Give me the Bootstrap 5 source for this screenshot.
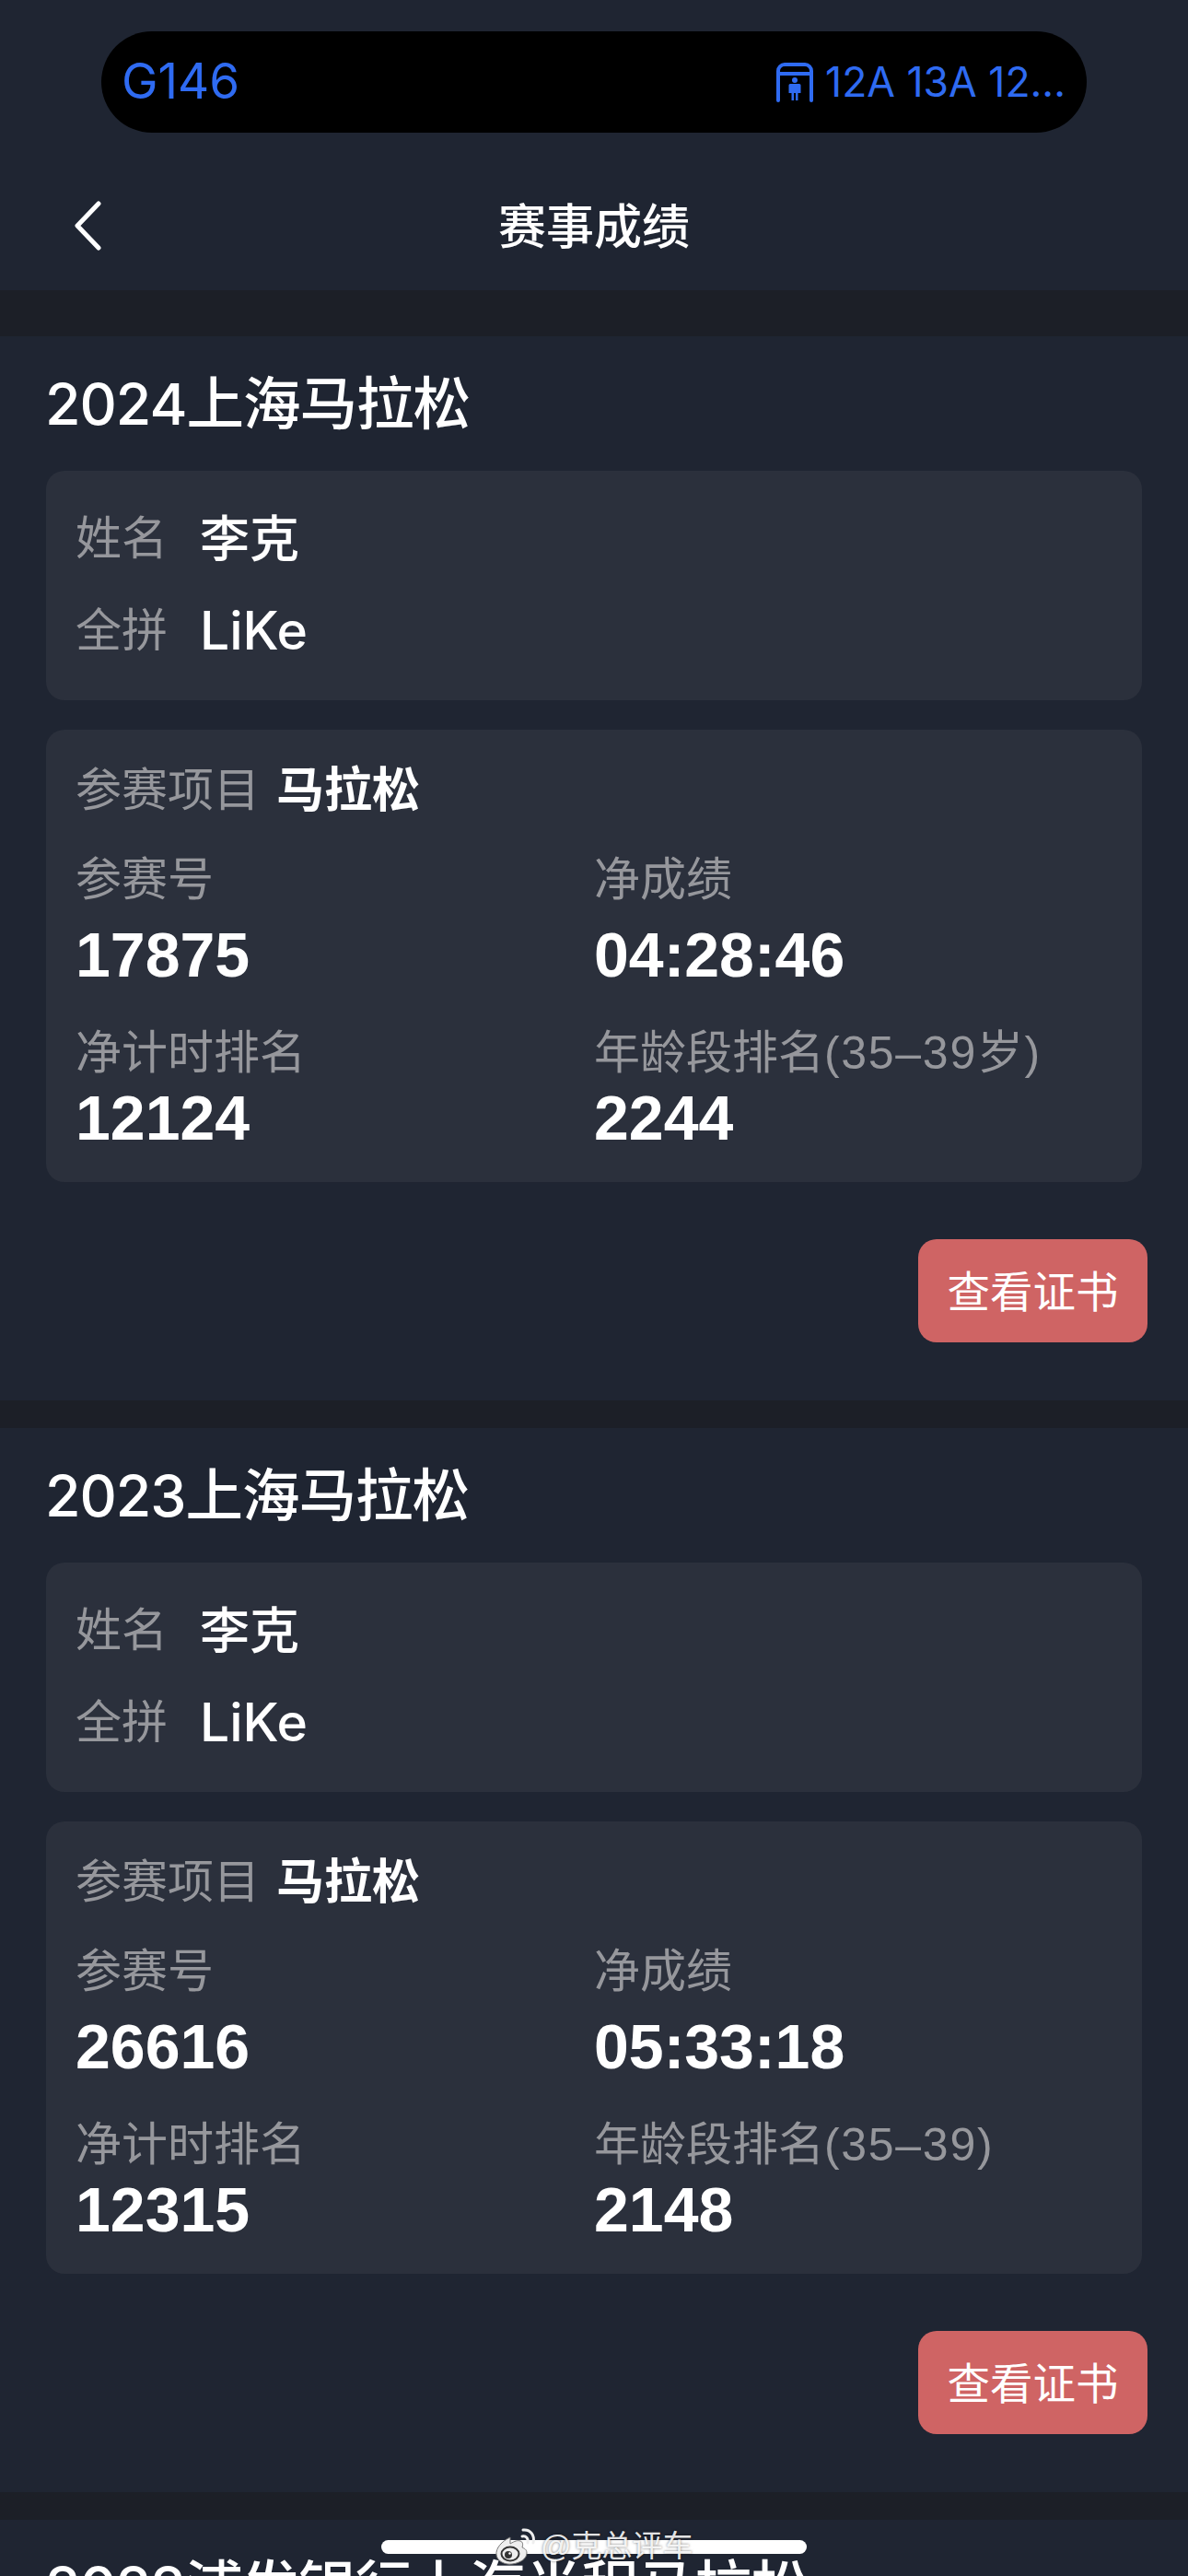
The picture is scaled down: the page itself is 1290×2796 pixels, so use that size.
<!DOCTYPE html>
<html lang="zh-CN">

<head>
    <meta charset="UTF-8">
    <meta name="viewport" content="width=device-width, initial-scale=1.0">
    <title>赛事成绩</title>
    <link href="https://cdn.jsdelivr.net/npm/bootstrap@5.3.0/dist/css/bootstrap.min.css" rel="stylesheet">
    <style>
        html, body {
            height: 2796px;
            overflow: hidden;
        }

        body {
            position: relative;
            background-color: #1c1f27;
            color: #fff;
            font-family: "Liberation Sans", "Noto Sans CJK SC", sans-serif;
        }

        .top-head {
            height: 315px;
            padding-top: 34px;
            background-color: #1f2532;
        }

        .island {
            width: 1070px;
            height: 110px;
            margin: 0 auto;
            padding: 0 23px 0 22px;
            background: #000;
            border-radius: 55px;
            color: #2f6bf2;
            font-family: Inter, "Liberation Sans", sans-serif;
        }

        .island-left {
            font-size: 53px;
        }

        .island-right {
            font-size: 44.500px;
            gap: 13px;
        }

        .head-row {
            height: 100px;
            margin-top: 53px;
        }

        .back-icon {
            left: 78px;
            top: 48px;
            transform: translateY(-50%);
        }

        .head-title {
            font-size: 52px;
            font-weight: 500;
            line-height: 100px;
        }

        .race-block {
            margin-top: 50px;
            padding: 33px 50px 63px;
            background-color: #1f2532;
        }

        .race-block + .race-block {
            margin-top: 30px;
        }

        .race-title {
            margin: 0 0 33px -1px;
            font-family: Inter, "Liberation Sans", "Noto Sans CJK SC", sans-serif;
            font-size: 62.500px;
            font-weight: 500;
            letter-spacing: -1px;
            line-height: 80px;
        }

        .info-box {
            border: 0;
            border-radius: 20px;
            background-color: #2b303c;
            padding-left: 32px;
            padding-right: 32px;
        }

        .name-box {
            height: 249px;
            margin-bottom: 32px;
            padding-top: 24px;
        }

        .name-row {
            height: 100px;
            align-items: center;
            gap: 35px;
        }

        .score-box {
            height: 491px;
            padding-top: 36px;
        }

        .muted-label {
            color: #96979c;
            font-size: 50px;
            line-height: 60px;
        }

        .age-range {
            letter-spacing: 1.700px;
        }

        .name-val {
            font-family: Inter, "Liberation Sans", "Noto Sans CJK SC", sans-serif;
            font-size: 54px;
            font-weight: 500;
        }

        .name-latin {
            font-size: 57px;
        }

        .item-row {
            gap: 18px;
            margin-bottom: 37px;
            line-height: 60px;
        }

        .item-val {
            font-size: 52px;
            font-weight: 700;
        }

        .num-val {
            font-size: 68px;
            font-weight: 700;
            line-height: 80px;
            margin-top: 11px;
        }

        .score-row2 {
            margin-top: 37px;
        }

        .score-row2 .num-val {
            margin-top: 0;
        }

        .cert-btn {
            width: 249px;
            height: 112px;
            margin: 62px -6px 0 0;
            padding: 6px 0 0;
            border: 0;
            border-radius: 20px;
            background-color: #cf6464;
            color: #fff;
            font-size: 46.500px;
        }

        .home-bar {
            position: absolute;
            left: 414px;
            top: 2757px;
            width: 462px;
            height: 15px;
            border-radius: 8px;
            background: #fff;
        }

        .wb-mark {
            position: absolute;
            left: 537px;
            top: 2743px;
            gap: 2px;
            color: rgba(255, 255, 255, 0.9);
            font-size: 33px;
            line-height: 42px;
            text-shadow: 0 0 3px rgba(0, 0, 0, 0.55);
        }
    </style>
</head>

<body>
    <div class="top-head">
        <div class="island d-flex align-items-center justify-content-between">
            <span class="island-left">G146</span>
            <span class="island-right d-flex align-items-center">
                <svg width="40" height="44" viewBox="0 0 40 44" fill="#2f6bf2">
                    <path d="M2 42V10a7 7 0 0 1 7-7h22a7 7 0 0 1 7 7v32M2 13h36" fill="none" stroke="#2f6bf2" stroke-width="4" stroke-linecap="round"/>
                    <circle cx="20" cy="20" r="3"/>
                    <path d="M15 24h10a1.500 1.500 0 0 1 1.500 1.500V34h-3v8h-2.500v-8h-2v8H16.500v-8h-3v-8.500A1.500 1.500 0 0 1 15 24z"/>
                </svg>
                <span>12A 13A 12...</span>
            </span>
        </div>
        <div class="head-row position-relative text-center">
            <svg class="back-icon position-absolute" width="34" height="54" viewBox="0 0 34 54" fill="none">
                <path d="M29 3L6 27l23 24" stroke="#fff" stroke-width="5" stroke-linecap="round" stroke-linejoin="round"/>
            </svg>
            <span class="head-title">赛事成绩</span>
        </div>
    </div>

    <div class="race-block">
        <h2 class="race-title">2024上海马拉松</h2>
        <div class="card info-box name-box">
            <div class="d-flex name-row"><span class="muted-label">姓名</span><span class="name-val">李克</span></div>
            <div class="d-flex name-row"><span class="muted-label">全拼</span><span class="name-val name-latin">LiKe</span></div>
        </div>
        <div class="card info-box score-box">
            <div class="d-flex align-items-center item-row"><span class="muted-label">参赛项目</span><span class="item-val">马拉松</span></div>
            <div class="row g-0">
                <div class="col-6">
                    <div class="muted-label">参赛号</div>
                    <div class="num-val">17875</div>
                </div>
                <div class="col-6">
                    <div class="muted-label">净成绩</div>
                    <div class="num-val">04:28:46</div>
                </div>
            </div>
            <div class="row g-0 score-row2">
                <div class="col-6">
                    <div class="muted-label">净计时排名</div>
                    <div class="num-val">12124</div>
                </div>
                <div class="col-6">
                    <div class="muted-label">年龄段排名<span class="age-range">(35–39岁)</span></div>
                    <div class="num-val">2244</div>
                </div>
            </div>
        </div>
        <div class="d-flex justify-content-end">
            <button type="button" class="btn cert-btn">查看证书</button>
        </div>
    </div>

    <div class="race-block">
        <h2 class="race-title">2023上海马拉松</h2>
        <div class="card info-box name-box">
            <div class="d-flex name-row"><span class="muted-label">姓名</span><span class="name-val">李克</span></div>
            <div class="d-flex name-row"><span class="muted-label">全拼</span><span class="name-val name-latin">LiKe</span></div>
        </div>
        <div class="card info-box score-box">
            <div class="d-flex align-items-center item-row"><span class="muted-label">参赛项目</span><span class="item-val">马拉松</span></div>
            <div class="row g-0">
                <div class="col-6">
                    <div class="muted-label">参赛号</div>
                    <div class="num-val">26616</div>
                </div>
                <div class="col-6">
                    <div class="muted-label">净成绩</div>
                    <div class="num-val">05:33:18</div>
                </div>
            </div>
            <div class="row g-0 score-row2">
                <div class="col-6">
                    <div class="muted-label">净计时排名</div>
                    <div class="num-val">12315</div>
                </div>
                <div class="col-6">
                    <div class="muted-label">年龄段排名<span class="age-range">(35–39)</span></div>
                    <div class="num-val">2148</div>
                </div>
            </div>
        </div>
        <div class="d-flex justify-content-end">
            <button type="button" class="btn cert-btn">查看证书</button>
        </div>
    </div>

    <div class="race-block">
        <h2 class="race-title">2022浦发银行上海半程马拉松</h2>
    </div>

    <div class="home-bar"></div>
    <div class="wb-mark d-flex align-items-center">
        <svg width="48" height="42" viewBox="0 0 48 42">
            <path d="M17 11C8 15 1 23 2 30c1 7 9 11 17 10 9-1 16-6 16-12 0-4-3-5-5-6 1-3 1-6-2-7-3-1-6 0-11 3z" fill="#eee" stroke="#777" stroke-width="1"/>
            <ellipse cx="17" cy="29" rx="9.500" ry="7.500" fill="#eee" stroke="#333" stroke-width="2"/>
            <circle cx="15" cy="30" r="4" fill="#333"/>
            <circle cx="16.500" cy="28.500" r="1.200" fill="#fff"/>
            <path d="M30 10c4-1 7 2 6 7M31 3c8-1 13 6 11 14" fill="none" stroke="#eee" stroke-width="3" stroke-linecap="round"/>
        </svg>
        <span>@克总评车</span>
    </div>
</body>

</html>
